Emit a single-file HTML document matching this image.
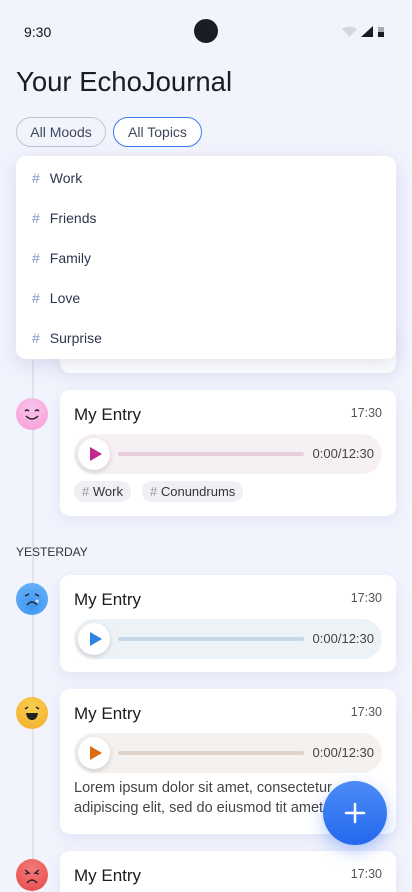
<!DOCTYPE html>
<html style="width:412px;height:892px;overflow:hidden"><head><meta charset="utf-8"><style>
*{box-sizing:border-box;margin:0;padding:0}
body{width:412px;height:892px;overflow:hidden;background:#f1f3fd;font-family:"Liberation Sans",sans-serif;position:relative;color:#1b1c21}
.abs{position:absolute}
.chip{position:absolute;top:117px;height:30px;border-radius:15px;font-size:14px;color:#40485e;display:flex;align-items:center;justify-content:center}
.card{position:absolute;left:60px;width:336px;background:#fff;border-radius:10px;box-shadow:0 4px 14px rgba(120,130,180,.12)}
.t{position:absolute;left:14px;top:14px;font-size:17px;color:#1b1c21}
.tm{position:absolute;right:14px;top:16px;font-size:12.5px;color:#555}
.pl{position:absolute;left:14px;width:308px;height:40px;border-radius:20px}
.pb{position:absolute;left:4px;top:4px;width:32px;height:32px;border-radius:50%;background:#fff;box-shadow:0 2px 6px rgba(0,0,0,.15)}
.pb:after{content:"";position:absolute;left:12px;top:9px;border-left:12px solid var(--c);border-top:7px solid transparent;border-bottom:7px solid transparent}
.bar{position:absolute;left:44px;top:18px;width:186px;height:4px;border-radius:2px}
.pt{position:absolute;right:8px;top:12px;font-size:13px;color:#444}
.emo{position:absolute;left:16px;width:32px;height:32px;border-radius:50%}
.di{position:absolute;left:16px;font-size:14px;color:#2f3650}
.di b{font-weight:normal;color:#7c95c6;margin-right:10px}
.tag{position:absolute;top:91px;height:21px;border-radius:10px;background:#eef0f4;font-size:13px;color:#333;padding:0 8px;line-height:21px}
.tag b{font-weight:normal;color:#999}
</style></head><body>
<div class="abs" style="left:24px;top:24px;font-size:14px;color:#111">9:30</div>
<div class="abs" style="left:194px;top:19px;width:24px;height:24px;border-radius:50%;background:#1b1c24"></div>
<svg class="abs" style="left:340px;top:25px" width="50" height="16"><path d="M2 4 Q9 -1 17 4 L9.5 12Z" fill="#d5d7e0"/><path d="M21 12 L33 12 L33 1Z" fill="#1b1c21"/><rect x="38" y="2" width="6" height="10" fill="#aaa"/><rect x="38" y="7" width="6" height="5" fill="#1b1c21"/></svg>
<div class="abs" style="left:16px;top:66px;font-size:27.5px;color:#1b1c21">Your EchoJournal</div>
<div class="chip" style="left:16px;width:90px;border:1px solid #c3c6d0">All Moods</div>
<div class="chip" style="left:113px;width:89px;border:1px solid #3b7bea;background:#fff">All Topics</div>

<div class="abs" style="left:32px;top:360px;width:2px;height:532px;background:#e0e3ec"></div>
<div class="card" style="top:320px;height:53px"></div>

<div class="abs" style="left:16px;top:156px;width:380px;height:203px;background:#fff;border-radius:10px;box-shadow:0 6px 18px rgba(100,110,160,.18);z-index:5">
<div class="di" style="top:14px"><b>#</b>Work</div>
<div class="di" style="top:54px"><b>#</b>Friends</div>
<div class="di" style="top:94px"><b>#</b>Family</div>
<div class="di" style="top:134px"><b>#</b>Love</div>
<div class="di" style="top:174px"><b>#</b>Surprise</div>
</div>

<div class="emo" style="top:398px;background:radial-gradient(circle at 50% 30%,#fbc4ea,#f79ad9)"><svg width="32" height="32"><path d="M9 13 q2-2 4 0 M19 13 q2-2 4 0 M10 18 q6 6 12 0" stroke="#222" stroke-width="1.4" fill="none"/></svg></div>
<div class="card" style="top:390px;height:126px">
<div class="t" style="top:15px">My Entry</div><div class="tm">17:30</div>
<div class="pl" style="top:44px;background:#f6f0f4;--c:#c0278f"><div class="pb"></div><div class="bar" style="background:#e6cfdb"></div><div class="pt">0:00/12:30</div></div>
<div class="tag" style="left:14px"><b>#</b> Work</div>
<div class="tag" style="left:82px"><b>#</b> Conundrums</div>
</div>

<div class="abs" style="left:16px;top:545px;font-size:12px;color:#333">YESTERDAY</div>

<div class="emo" style="top:583px;background:radial-gradient(circle at 50% 70%,#3c95f2,#6fb5fa)"><svg width="32" height="32"><path d="M9 13 l4-2 M23 13 l-4-2 M11 22 q5-6 10 0" stroke="#222" stroke-width="1.4" fill="none"/><circle cx="21" cy="18" r="1.5" fill="#cdeaff"/></svg></div>
<div class="card" style="top:575px;height:97px">
<div class="t" style="top:15px">My Entry</div><div class="tm">17:30</div>
<div class="pl" style="top:44px;background:#edf2f7;--c:#2b84e0"><div class="pb"></div><div class="bar" style="background:#c6d7e8"></div><div class="pt">0:00/12:30</div></div>
</div>

<div class="emo" style="top:697px;background:radial-gradient(circle at 50% 30%,#f8cd4f,#f2ae2c)"><svg width="32" height="32"><path d="M9 12 l3-2 M23 12 l-3-2" stroke="#222" stroke-width="1.4" fill="none"/><path d="M10 16 h12 q-1 7-6 7 q-5 0-6-7z" fill="#222"/></svg></div>
<div class="card" style="top:689px;height:145px">
<div class="t" style="top:15px">My Entry</div><div class="tm">17:30</div>
<div class="pl" style="top:44px;background:#f5f1ee;--c:#dd6a10"><div class="pb"></div><div class="bar" style="background:#dfd3c9"></div><div class="pt">0:00/12:30</div></div>
<div class="abs" style="left:14px;top:89px;font-size:14.5px;line-height:20px;color:#444;white-space:nowrap">Lorem ipsum dolor sit amet, consectetur<br>adipiscing elit, sed do eiusmod tit amet</div>
</div>

<div class="emo" style="top:859px;background:radial-gradient(circle at 50% 30%,#f47a7a,#e94848)"><svg width="32" height="32"><path d="M9 11 l4 3 l-4 1 M23 11 l-4 3 l4 1 M11 24 q5-6 10 0" stroke="#222" stroke-width="1.4" fill="none"/></svg></div>
<div class="card" style="top:851px;height:60px">
<div class="t" style="top:15px">My Entry</div><div class="tm">17:30</div>
</div>

<div class="abs" style="left:323px;top:781px;width:64px;height:64px;border-radius:50%;background:linear-gradient(#4b8cf6,#2468ee);box-shadow:0 6px 16px rgba(50,110,240,.35);z-index:6"><svg width="64" height="64"><path d="M32 23v18M23 32h18" stroke="#fff" stroke-width="2.5" stroke-linecap="round"/></svg></div>
</body></html>
